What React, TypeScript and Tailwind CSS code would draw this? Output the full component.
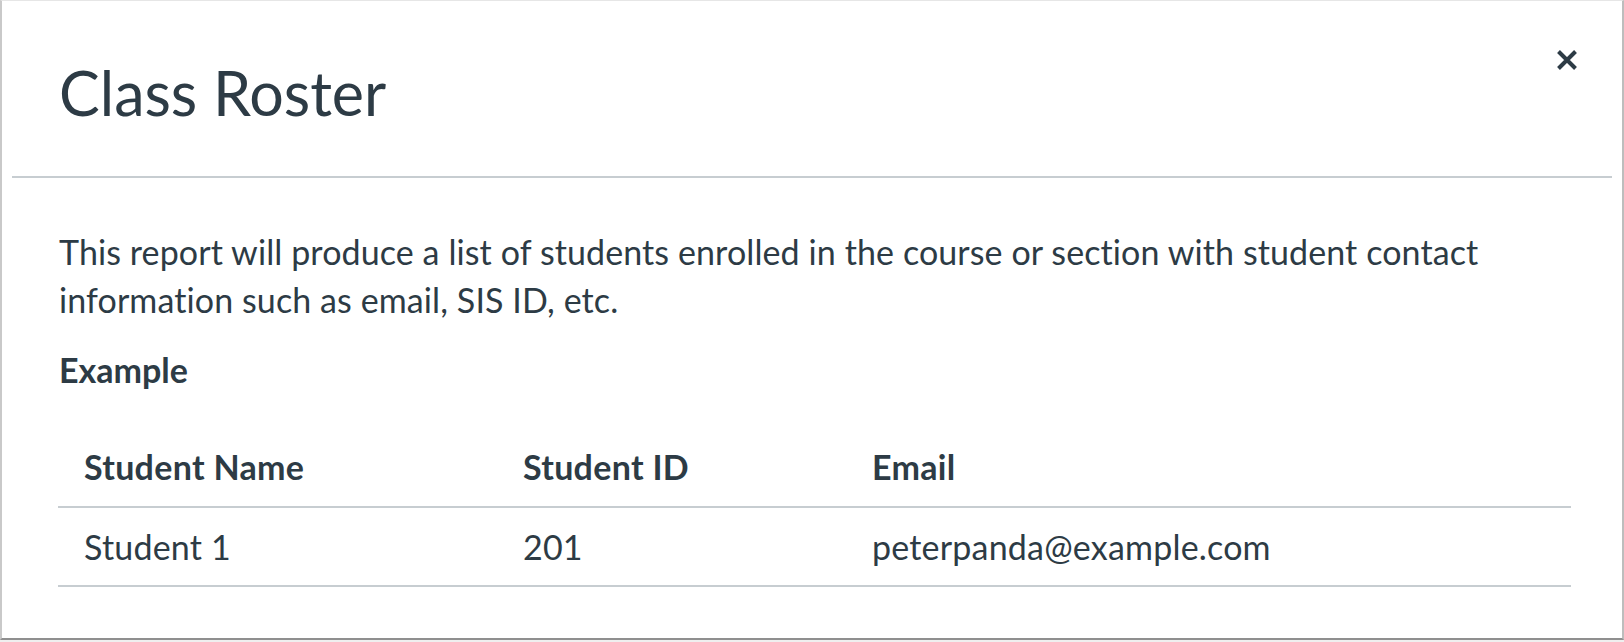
import React from "react";

const rows = [{ name: "Student 1", id: "201", email: "peterpanda@example.com" }];

function CloseIcon() {
  return (
    <svg viewBox="0 0 22 22" className="w-[22px] h-[22px]" fill="none">
      <path d="M2.5 2.5L19.5 19.5M19.5 2.5L2.5 19.5" stroke="#2d3b45" strokeWidth="4" />
    </svg>
  );
}

export default function App() {
  return (
    <div className="w-[1624px] h-[642px] bg-[#efefef] font-[Lato,sans-serif] text-[#2d3b45]">
      {/* modal card */}
      <div className="h-[640px] bg-white border-t border-t-[#e6e6e6] border-l-2 border-l-[#c9c9c9] border-r-2 border-r-[#bdbdbd] border-b-2 border-b-[#8f8f8f]">
        <div className="mx-[10px]">
          {/* header */}
          <header className="relative h-[177px] border-b-2 border-[#c7cdd1] pl-[47px] pt-[57px]">
            <h2 className="text-[61px] leading-[70px] font-normal">Class Roster</h2>
            <button className="absolute top-[48px] right-[34px] w-[22px] h-[22px]" aria-label="Close">
              <CloseIcon />
            </button>
          </header>

          {/* body */}
          <div className="pl-[47px] pr-[41px]">
            <p className="mt-[50px] text-[34px] leading-[48px] tracking-[0.1px] pr-[6px]">
              This report will produce a list of students enrolled in the course or section with student contact
              information such as email, SIS ID, etc.
            </p>
            <h3 className="mt-[22px] text-[34px] leading-[48px] font-bold">Example</h3>

            <div className="mt-[33px] -ml-px text-[34px] leading-[48px]">
              <div className="grid grid-cols-[440px_349px_1fr] border-b-2 border-[#c7cdd1] font-bold tracking-[0.3px]">
                <div className="pl-[26px] pt-[16px] pb-[15px]">Student Name</div>
                <div className="pl-[25px] pt-[16px] pb-[15px]">Student ID</div>
                <div className="pl-[25px] pt-[16px] pb-[15px]">Email</div>
              </div>
              {rows.map((r) => (
                <div key={r.id} className="grid grid-cols-[440px_349px_1fr] border-b-2 border-[#c7cdd1] tracking-[0.2px]">
                  <div className="pl-[26px] pt-[15px] pb-[14px]">{r.name}</div>
                  <div className="pl-[25px] pt-[15px] pb-[14px]">{r.id}</div>
                  <div className="pl-[25px] pt-[15px] pb-[14px]">{r.email}</div>
                </div>
              ))}
            </div>
          </div>
        </div>
      </div>
    </div>
  );
}
